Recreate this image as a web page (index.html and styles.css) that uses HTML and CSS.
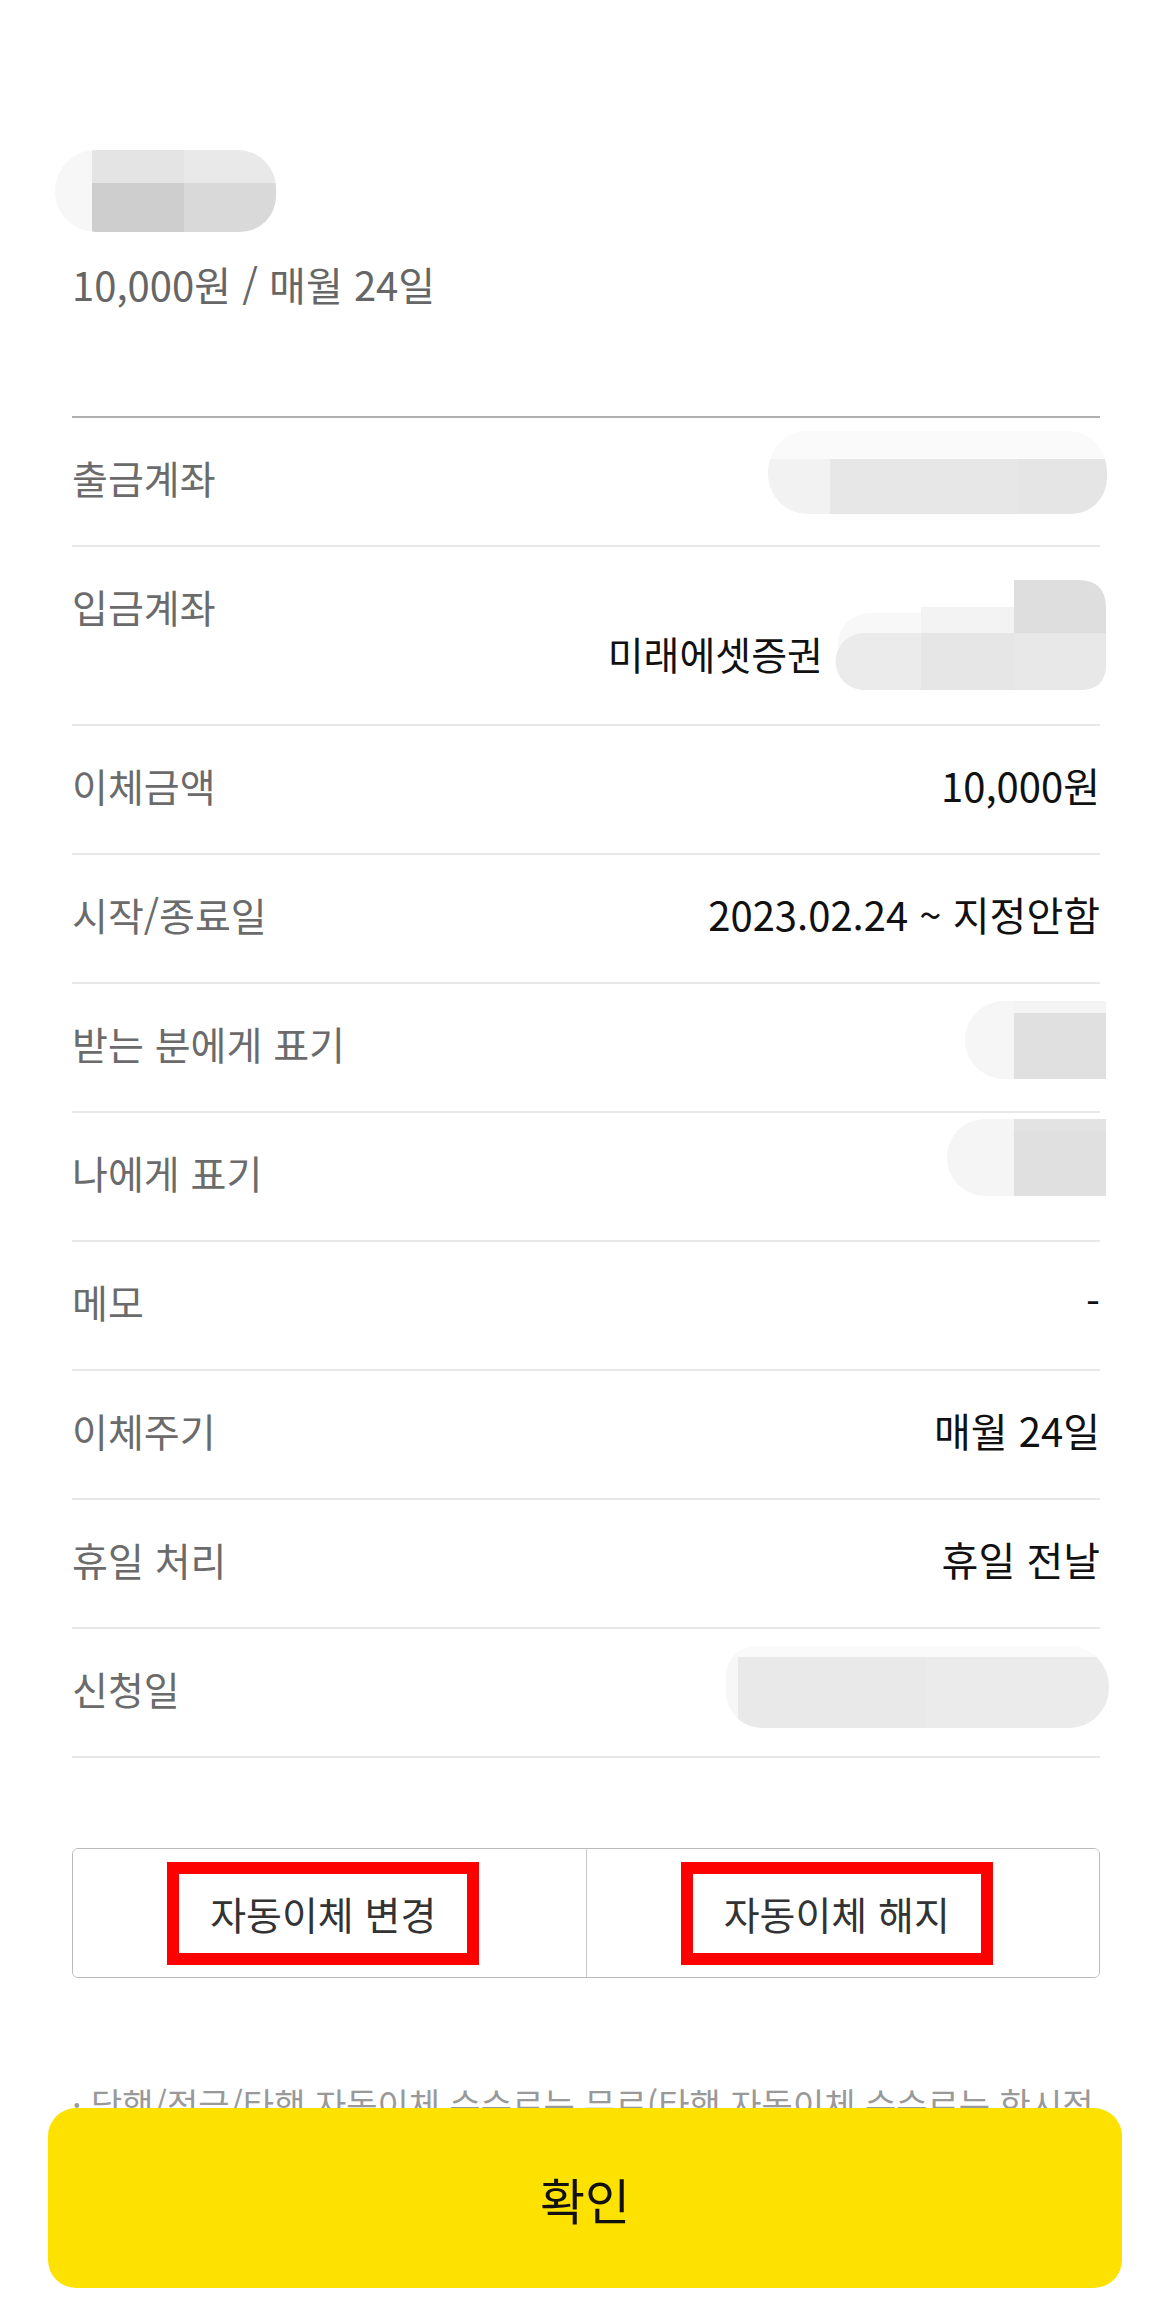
FILE: index.html
```html
<!DOCTYPE html>
<html lang="ko">
<head>
    <meta charset="UTF-8">
    <meta name="viewport" content="width=device-width, initial-scale=1.0">
    <title>자동이체 상세</title>
    <link rel="stylesheet" href="styles.css">
</head>
<body>
    <main class="detail">
        <header class="summary">
            <span class="blur blur-name"></span>
            <p class="summary-text">10,000원 / 매월 24일</p>
        </header>

        <dl class="info">
            <div class="info-row">
                <dt class="info-label">출금계좌</dt>
                <dd class="info-value"><span class="blur blur-account"></span></dd>
            </div>
            <div class="info-row info-row-tall">
                <dt class="info-label">입금계좌</dt>
                <dd class="info-value">
                    <span class="bank-name">미래에셋증권</span>
                    <svg class="blur-bank" width="272" height="110" viewBox="0 0 272 110">
                        <rect x="4" y="33" width="120" height="60" rx="34" fill="#f8f8f8"/>
                        <rect x="87" y="27" width="93" height="40" fill="#f3f3f3"/>
                        <path d="M180 0 H244 Q272 0 272 28 V60 H180 Z" fill="#dedede"/>
                        <path d="M30 53 H272 V84 Q272 110 246 110 H30 A28.5 28.5 0 0 1 30 53 Z" fill="#ebebeb"/>
                        <rect x="87" y="53" width="93" height="57" fill="#e6e6e6"/>
                        <path d="M180 53 H272 V84 Q272 110 246 110 H180 Z" fill="#e8e8e8"/>
                    </svg>
                </dd>
            </div>
            <div class="info-row">
                <dt class="info-label">이체금액</dt>
                <dd class="info-value">10,000원</dd>
            </div>
            <div class="info-row">
                <dt class="info-label">시작/종료일</dt>
                <dd class="info-value">2023.02.24 ~ 지정안함</dd>
            </div>
            <div class="info-row">
                <dt class="info-label">받는 분에게 표기</dt>
                <dd class="info-value"><span class="blur blur-to"></span></dd>
            </div>
            <div class="info-row">
                <dt class="info-label">나에게 표기</dt>
                <dd class="info-value"><span class="blur blur-me"></span></dd>
            </div>
            <div class="info-row">
                <dt class="info-label">메모</dt>
                <dd class="info-value">-</dd>
            </div>
            <div class="info-row">
                <dt class="info-label">이체주기</dt>
                <dd class="info-value">매월 24일</dd>
            </div>
            <div class="info-row">
                <dt class="info-label">휴일 처리</dt>
                <dd class="info-value">휴일 전날</dd>
            </div>
            <div class="info-row">
                <dt class="info-label">신청일</dt>
                <dd class="info-value"><span class="blur blur-date"></span></dd>
            </div>
        </dl>

        <div class="actions">
            <button class="action-button"><span class="mark">자동이체 변경</span></button>
            <button class="action-button"><span class="mark">자동이체 해지</span></button>
        </div>

        <p class="notice">· 당행/적금/타행 자동이체 수수료는 무료(타행 자동이체 수수료는 한시적 면제이며, 추후 정책에 따라 변경될 수 있습니다.) 자동이체 변경 및 해지는 이체일 전 영업일까지 가능합니다.</p>
    </main>

    <div class="bottom-bar">
        <button class="confirm-button">확인</button>
    </div>
</body>
</html>
```

FILE: styles.css
```css
body {
    margin: 0;
    background-color: #fff;
    font-family: "Noto Sans CJK KR", "Noto Sans", sans-serif;
    color: #111;
}
.detail {
    padding: 150px 70px 40px 72px;
}

.summary-text {
    margin: 27px 0 106px 0;
    font-size: 40px;
    line-height: 51px;
    color: #666;
}

/* blurred private values */
.blur {
    display: block;
}
.blur-name {
    width: 221px;
    height: 82px;
    margin-left: -17px;
    border-radius: 41px 38px 36px 41px;
    background:
        linear-gradient(to bottom, #e4e4e4 0 33px, #cecece 33px) 37px 0 / 92px 100% no-repeat,
        linear-gradient(to bottom, #e9e9e9 0 33px, #d9d9d9 33px) 129px 0 / 92px 100% no-repeat,
        #f7f7f7;
}
.blur-account {
    width: 339px;
    height: 83px;
    margin: -21px -7px 0 0;
    border-radius: 40px 40px 36px 40px;
    background:
        linear-gradient(to bottom, #fafafa 0 28px, transparent 28px),
        linear-gradient(to right, #f2f2f2 0 62px, #e7e7e7 62px 250px, #e5e5e5 250px);
}
.blur-to {
    width: 141px;
    height: 78px;
    margin: -17px -6px 0 0;
    border-radius: 39px 0 0 39px;
    background:
        linear-gradient(to bottom, #f4f4f4 0 12px, #e0e0e0 12px) 49px 0 / 92px 100% no-repeat,
        #f6f6f6;
}
.blur-me {
    width: 159px;
    height: 77px;
    margin: -28px -6px 0 0;
    border-radius: 38px 0 0 38px;
    background:
        linear-gradient(to bottom, #e3e3e3 0 12px, #e0e0e0 12px) 67px 0 / 92px 100% no-repeat,
        #f5f5f5;
}
.blur-date {
    width: 383px;
    height: 82px;
    margin: -17px -9px 0 0;
    border-radius: 30px 40px 40px 36px;
    background:
        linear-gradient(to bottom, #fafafa 0 11px, transparent 11px),
        linear-gradient(to right, #f7f7f7 0 12px, #e9e9e9 12px 200px, #ebebeb 200px);
}
.blur-bank {
    display: block;
    margin: 0 -6px -8px 11px;
}

/* detail rows */
.info {
    margin: 0;
    border-top: 2px solid #b0b0b0;
}
.info-row {
    display: flex;
    flex-flow: row nowrap;
    justify-content: space-between;
    align-items: flex-start;
    padding: 34px 0 42px 0;
    border-bottom: 2px solid #e8e8e8;
    line-height: 51px;
}
.info-label {
    font-size: 39px;
    color: #6b6b6b;
}
.info-value {
    margin: 0;
    height: 51px;
    display: flex;
    justify-content: flex-end;
    align-items: flex-start;
    font-size: 40px;
    color: #111;
}
.info-row-tall .info-value {
    height: 101px;
    align-items: flex-end;
}
.bank-name {
    margin-bottom: 3px;
    font-size: 39px;
}

/* change / cancel buttons */
.actions {
    margin-top: 90px;
    display: flex;
    flex-flow: row nowrap;
    height: 130px;
    box-sizing: border-box;
    border: 1px solid #bababa;
    border-radius: 6px;
    overflow: hidden;
}
.action-button {
    flex: 1;
    display: flex;
    justify-content: center;
    align-items: center;
    padding: 0 12px 0 0;
    background-color: #fff;
    border: 0;
    font-family: inherit;
    font-size: 39px;
    color: #333;
}
.action-button + .action-button {
    border-left: 1px solid #c8c8c8;
}
.mark {
    display: inline-block;
    padding: 0 31px;
    border: 12px solid #fd0000;
    line-height: 79px;
}

.notice {
    margin: 102px 0 0 0;
    font-size: 34px;
    line-height: 48px;
    color: #999;
    word-break: keep-all;
}

/* fixed confirm bar */
.bottom-bar {
    position: fixed;
    left: 0;
    right: 0;
    bottom: 0;
    padding: 0 48px 29px 48px;
    background-color: #fff;
}
.confirm-button {
    display: block;
    width: 100%;
    height: 180px;
    background-color: #fde100;
    border: 0;
    border-radius: 28px;
    font-family: inherit;
    font-size: 49px;
    color: #111;
}
```
